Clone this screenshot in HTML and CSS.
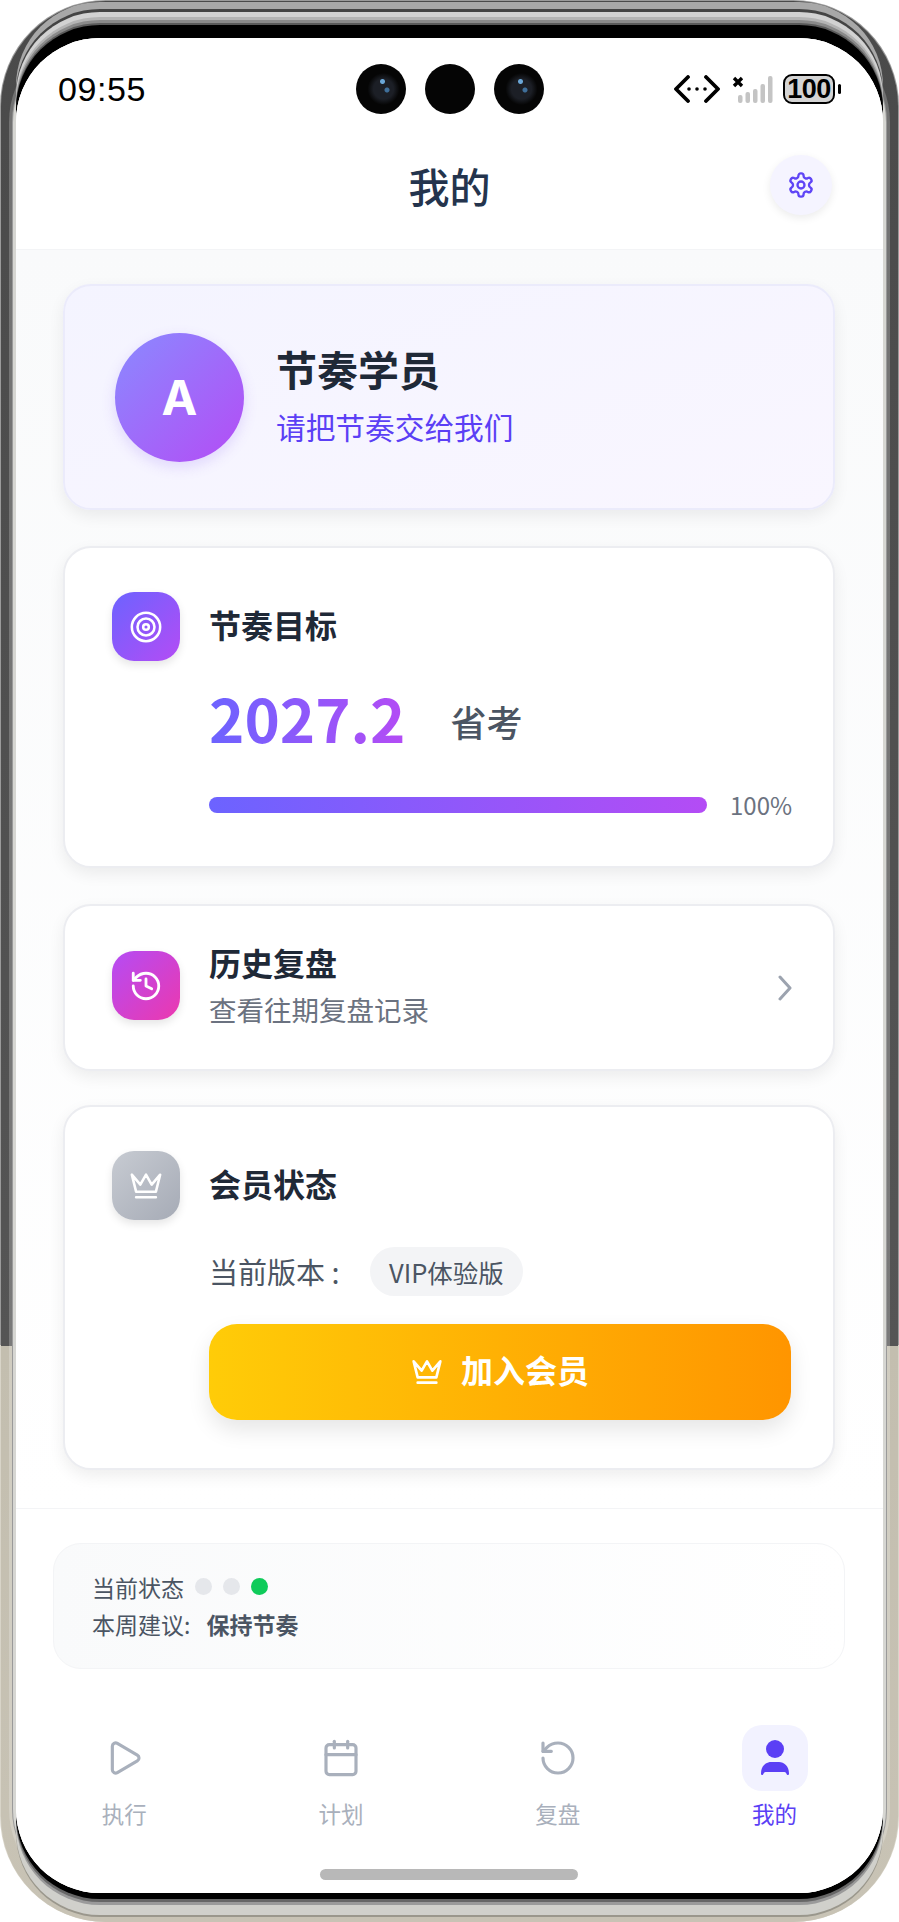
FILE: index.html
```html
<!DOCTYPE html>
<html lang="zh-CN">
<head>
    <meta charset="UTF-8">
    <meta name="viewport" content="width=device-width, initial-scale=1.0">
    <title>我的</title>
    <link rel="stylesheet" href="styles.css">
</head>
<body>
<div class="phone">
  <div class="phone-band">
    <div class="screen">
      <header class="top">
        <div class="statusbar">
          <span class="time">09:55</span>
          <div class="cams">
            <span class="cam"></span>
            <span class="cam cam-plain"></span>
            <span class="cam"></span>
          </div>
          <div class="sys">
            <svg class="sys-link" viewBox="0 0 46 28" fill="none" stroke="#000" stroke-width="3.8" stroke-linecap="round" stroke-linejoin="round">
              <path d="M14 2 2 14l12 12M32 2l12 12-12 12"/>
              <circle cx="15" cy="14" r="1.8" fill="#000" stroke="none"/>
              <circle cx="23" cy="14" r="1.8" fill="#000" stroke="none"/>
              <circle cx="31" cy="14" r="1.8" fill="#000" stroke="none"/>
            </svg>
            <svg class="sys-signal" viewBox="0 0 42 28">
              <path d="M2 3l8 8M10 3l-8 8" stroke="#000" stroke-width="3.4" fill="none"/>
              <g fill="#c4c4c4">
                <rect x="6" y="20" width="4.5" height="8" rx="2"/>
                <rect x="13.5" y="17" width="4.5" height="11" rx="2"/>
                <rect x="21" y="14" width="4.5" height="14" rx="2"/>
                <rect x="28.5" y="9" width="4.5" height="19" rx="2"/>
                <rect x="36" y="1" width="4.5" height="27" rx="2"/>
              </g>
            </svg>
            <div class="battery"><span class="battery-num">100</span></div>
            <span class="battery-nub"></span>
          </div>
        </div>
        <div class="titlebar">
          <span></span>
          <h1 class="page-title">我的</h1>
          <button class="gear">
            <svg width="28" height="28" viewBox="0 0 24 24" fill="none" stroke="#5f45f6" stroke-width="2" stroke-linecap="round" stroke-linejoin="round">
              <path d="M12.22 2h-.44a2 2 0 0 0-2 2v.18a2 2 0 0 1-1 1.73l-.43.25a2 2 0 0 1-2 0l-.15-.08a2 2 0 0 0-2.73.73l-.22.38a2 2 0 0 0 .73 2.73l.15.1a2 2 0 0 1 1 1.72v.51a2 2 0 0 1-1 1.74l-.15.09a2 2 0 0 0-.73 2.73l.22.38a2 2 0 0 0 2.73.73l.15-.08a2 2 0 0 1 2 0l.43.25a2 2 0 0 1 1 1.73V20a2 2 0 0 0 2 2h.44a2 2 0 0 0 2-2v-.18a2 2 0 0 1 1-1.73l.43-.25a2 2 0 0 1 2 0l.15.08a2 2 0 0 0 2.73-.73l.22-.39a2 2 0 0 0-.73-2.73l-.15-.08a2 2 0 0 1-1-1.74v-.5a2 2 0 0 1 1-1.74l.15-.09a2 2 0 0 0 .73-2.73l-.22-.38a2 2 0 0 0-2.73-.73l-.15.08a2 2 0 0 1-2 0l-.43-.25a2 2 0 0 1-1-1.73V4a2 2 0 0 0-2-2z"/>
              <circle cx="12" cy="12" r="3"/>
            </svg>
          </button>
        </div>
      </header>

      <main class="content">
        <section class="card profile">
          <div class="avatar">A</div>
          <div class="profile-text">
            <div class="profile-name">节奏学员</div>
            <div class="profile-motto">请把节奏交给我们</div>
          </div>
        </section>

        <section class="card goal">
          <div class="card-head">
            <div class="tile tile-violet">
              <svg width="34" height="34" viewBox="0 0 24 24" fill="none" stroke="#fff" stroke-width="1.8">
                <circle cx="12" cy="12" r="10"/>
                <circle cx="12" cy="12" r="6"/>
                <circle cx="12" cy="12" r="2"/>
              </svg>
            </div>
            <div class="card-title">节奏目标</div>
          </div>
          <div class="goal-row">
            <span class="goal-year">2027.2</span>
            <span class="goal-name">省考</span>
          </div>
          <div class="progress-row">
            <div class="progress"></div>
            <span class="progress-num">100%</span>
          </div>
        </section>

        <section class="card history">
          <div class="tile tile-pink">
            <svg width="34" height="34" viewBox="0 0 24 24" fill="none" stroke="#fff" stroke-width="2" stroke-linecap="round" stroke-linejoin="round">
              <path d="M3 12a9 9 0 1 0 9-9 9.75 9.75 0 0 0-6.74 2.74L3 8"/>
              <path d="M3 3v5h5"/>
              <path d="M12 7v5l4 2"/>
            </svg>
          </div>
          <div class="history-text">
            <div class="card-title">历史复盘</div>
            <div class="history-sub">查看往期复盘记录</div>
          </div>
          <svg class="chevron" width="16" height="26" viewBox="0 0 16 26" fill="none" stroke="#9ca3af" stroke-width="3" stroke-linecap="round" stroke-linejoin="round">
            <path d="M3 2l10 11L3 24"/>
          </svg>
        </section>

        <section class="card member">
          <div class="card-head">
            <div class="tile tile-grey">
              <svg width="34" height="34" viewBox="0 0 24 24" fill="none" stroke="#fff" stroke-width="1.8" stroke-linecap="round" stroke-linejoin="round">
                <path d="m2 4 3 12h14l3-12-6 7-4-7-4 7-6-7zm3 16h14"/>
              </svg>
            </div>
            <div class="card-title">会员状态</div>
          </div>
          <div class="member-row">
            <span class="member-label">当前版本 :</span>
            <span class="pill">VIP体验版</span>
          </div>
          <button class="join">
            <svg width="32" height="32" viewBox="0 0 24 24" fill="none" stroke="#fff" stroke-width="2" stroke-linecap="round" stroke-linejoin="round">
              <path d="m2 4 3 12h14l3-12-6 7-4-7-4 7-6-7zm3 16h14"/>
            </svg>
            <span class="join-text">加入会员</span>
          </button>
        </section>
      </main>

      <footer class="bottom">
        <div class="panel">
          <div class="panel-line">
            当前状态
            <span class="dot"></span>
            <span class="dot"></span>
            <span class="dot dot-on"></span>
          </div>
          <div class="panel-line">本周建议:<b class="panel-tip">保持节奏</b></div>
        </div>
        <nav class="tabs">
          <div class="tab">
            <div class="tab-icon">
              <svg width="40" height="40" viewBox="0 0 24 24" fill="none" stroke="currentColor" stroke-width="1.9" stroke-linecap="round" stroke-linejoin="round">
                <path d="M5 5a2 2 0 0 1 3.008-1.728l11.997 6.998a2 2 0 0 1 .003 3.458l-12 7A2 2 0 0 1 5 19z"/>
              </svg>
            </div>
            <span>执行</span>
          </div>
          <div class="tab">
            <div class="tab-icon">
              <svg width="40" height="40" viewBox="0 0 24 24" fill="none" stroke="currentColor" stroke-width="1.9" stroke-linecap="round" stroke-linejoin="round">
                <path d="M8 2v4"/>
                <path d="M16 2v4"/>
                <rect x="3" y="4" width="18" height="18" rx="2"/>
                <path d="M3 10h18"/>
              </svg>
            </div>
            <span>计划</span>
          </div>
          <div class="tab">
            <div class="tab-icon">
              <svg width="40" height="40" viewBox="0 0 24 24" fill="none" stroke="currentColor" stroke-width="1.9" stroke-linecap="round" stroke-linejoin="round">
                <path d="M3 12a9 9 0 1 0 9-9 9.75 9.75 0 0 0-6.74 2.74L3 8"/>
                <path d="M3 3v5h5"/>
              </svg>
            </div>
            <span>复盘</span>
          </div>
          <div class="tab tab-active">
            <div class="tab-icon">
              <svg width="40" height="40" viewBox="0 0 40 40" fill="currentColor">
                <circle cx="20" cy="11" r="9"/>
                <path d="M7.5 37C6.5 37 6 36.5 6 35.5 6 28 11 24 16 24h8c5 0 10 4 10 11.5 0 1-.5 1.500-1.500 1.500-1 0-1-3-3-3h-19c-2 0-2 3-3 3z"/>
              </svg>
            </div>
            <span>我的</span>
          </div>
        </nav>
        <div class="home-bar"></div>
      </footer>
    </div>
  </div>
</div>
</body>
</html>
```

FILE: styles.css
```css
* { box-sizing: border-box; }
html, body { margin: 0; background: #fff; }
body { font-family: "Noto Sans CJK SC", "Noto Sans", sans-serif; color: #1f2d3d; }
button { font-family: inherit; border: none; cursor: pointer; }

/* device frame */
.phone {
    width: 899px;
    height: 1922px;
    padding: 1px 1px 0;
    border-radius: 106px;
    background: linear-gradient(180deg, #9a9a9a 0, #9a9a9a 70%, #d8d4c8 70%, #d8d4c8 100%);
}
.phone-band {
    position: relative;
    height: 100%;
    padding: 37px 15px 29px;
    border-radius: 105px;
    background: linear-gradient(180deg, #4a4a4a 0, #555 70%, #c3beaf 70%, #c8c3b5 100%);
}
.phone-band::before {
    content: "";
    position: absolute;
    left: 15px;
    right: 15px;
    top: 37px;
    bottom: 29px;
    border-radius: 84px;
    box-shadow:
        0 -13px 0 #000, 0 -15px 0 #5a5a5a, 0 -18px 0 #8a8a8a, 0 -21px 0 #b4b4b4, 0 -26px 0 #d2d2d2, 0 -29px 0 #444, 0 -36px 0 #a8a8a8,
        0 6px 0 #000, 0 9px 0 #666, 0 12px 0 #9a9a9a, 0 22px 0 #d0d0cb, 0 24px 0 #9a978c,
        0 0 0 3px #d6d6d2, 0 0 0 4px #9a9a9a, 0 0 0 7px rgba(255, 255, 255, .22);
}
.screen {
    position: relative;
    height: 100%;
    display: flex;
    flex-direction: column;
    overflow: hidden;
    border-radius: 84px;
    background: #fff;
}

/* top */
.top { height: 212px; flex: none; background: #fff; border-bottom: 1px solid #f3f4f6; }
.statusbar {
    display: grid;
    grid-template-columns: 1fr auto 1fr;
    align-items: center;
    height: 50px;
    margin-top: 26px;
    padding: 0 42px;
}
.time { font-family: "Liberation Sans", sans-serif; font-size: 34px; letter-spacing: .6px; line-height: 48px; color: #000; }
.cams { display: flex; gap: 19px; }
.cam {
    width: 50px;
    height: 50px;
    border-radius: 50%;
    background:
        radial-gradient(circle at 53% 35%, #6aa6d6 0 2px, transparent 3px),
        radial-gradient(circle at 62% 52%, #3f6f9a 0 2px, transparent 3px),
        radial-gradient(circle at 55% 50%, #1c1f26 0 10px, #050505 16px);
}
.cam-plain { background: #050505; }
.sys { display: flex; align-items: center; justify-content: flex-end; }
.sys-link { width: 46px; height: 28px; margin-right: 12px; }
.sys-signal { width: 42px; height: 28px; margin-right: 9px; }
.battery {
    width: 52px;
    height: 30px;
    display: flex;
    align-items: center;
    justify-content: center;
    border: 2.500px solid #000;
    border-radius: 9px;
    background: #d4d4d4;
}
.battery-num { font-family: "Liberation Sans", sans-serif; font-size: 27px; font-weight: 700; color: #000; letter-spacing: -.5px; }
.battery-nub { width: 3px; height: 10px; margin-left: 3px; border-radius: 2px; background: #000; }
.titlebar {
    display: grid;
    grid-template-columns: 1fr auto 1fr;
    align-items: center;
    margin-top: 41px;
    padding: 0 51px;
}
.page-title { margin: 0; font-size: 41px; line-height: 60px; font-weight: 500; color: #24344d; }
.gear {
    justify-self: end;
    width: 62px;
    height: 60px;
    display: flex;
    align-items: center;
    justify-content: center;
    padding: 0;
    border-radius: 50%;
    background: #f5f4ff;
    box-shadow: 0 3px 8px rgba(0, 0, 0, .08);
}

/* cards */
.content {
    flex: 1;
    display: flex;
    flex-direction: column;
    gap: 36px;
    padding: 34px 48px 0 47px;
    background: linear-gradient(180deg, #f9fafb 0, #fff 100%);
}
.card {
    border: 2px solid #ecedf1;
    border-radius: 28px;
    background: #fff;
    box-shadow: 0 6px 16px rgba(0, 0, 0, .07);
}
.profile {
    height: 226px;
    display: flex;
    align-items: center;
    gap: 32px;
    padding-left: 50px;
    border-color: #ebebfb;
    background: linear-gradient(160deg, #f4f4ff 0, #f9f6ff 100%);
}
.avatar {
    width: 129px;
    height: 129px;
    display: flex;
    align-items: center;
    justify-content: center;
    border-radius: 50%;
    font-family: Inter, sans-serif;
    font-size: 48px;
    font-weight: 700;
    color: #fff;
    background: linear-gradient(135deg, #8a8aff 0, #b44cf5 100%);
    box-shadow: 0 5px 14px rgba(120, 80, 240, .18);
}
.profile-text { padding-bottom: 6px; }
.profile-name { font-size: 41px; line-height: 54px; font-weight: 700; color: #1f2937; }
.profile-motto { margin-top: 12px; font-size: 29.700px; line-height: 40px; color: #5b3ff5; }

.goal { height: 322px; padding: 44px 40px 0 47px; }
.member { height: 365px; margin-top: -2px; padding: 44px 40px 0 47px; }
.card-head { display: flex; align-items: center; gap: 29px; }
.card-title { font-size: 32px; line-height: 44px; font-weight: 700; color: #1f2937; }
.card-head .card-title { padding-bottom: 5px; }
.tile {
    width: 68px;
    height: 69px;
    flex: none;
    display: flex;
    align-items: center;
    justify-content: center;
    border-radius: 22px;
    box-shadow: 0 4px 8px rgba(0, 0, 0, .1);
}
.tile-violet { background: linear-gradient(135deg, #6c63ff 0, #b44cf5 100%); }
.tile-pink { background: linear-gradient(135deg, #b44cf5 0, #ec38ae 100%); }
.tile-grey { background: linear-gradient(135deg, #c7cbd2 0, #a6abb6 100%); }

.goal-row { display: flex; align-items: center; gap: 45px; margin: 18px 0 0 97px; height: 76px; }
.goal-year {
    font-size: 60px;
    line-height: 76px;
    font-weight: 700;
    color: transparent;
    background: linear-gradient(90deg, #6c63ff 0, #b44cf5 100%);
    -webkit-background-clip: text;
    background-clip: text;
}
.goal-name { margin-top: 7px; font-size: 36px; font-weight: 500; color: #4b5563; }
.progress-row { display: flex; align-items: center; gap: 23px; margin: 36px 0 0 97px; }
.progress {
    width: 498px;
    height: 16px;
    border-radius: 8px;
    background: linear-gradient(90deg, #6c63ff 0, #b44cf5 100%);
}
.progress-num { font-size: 24px; line-height: 28px; color: #6b7280; }

.history {
    height: 167px;
    display: flex;
    align-items: center;
    gap: 29px;
    padding: 0 40px 4px 47px;
}
.history-text { flex: 1; }
.history .card-title { line-height: 46px; }
.history-sub { margin-top: 1px; font-size: 27.500px; line-height: 46px; color: #6b7280; }
.chevron { flex: none; margin-top: 4px; }

.member-row { display: flex; align-items: center; margin: 26px 0 0 97px; }
.member-label { width: 161px; font-size: 29px; line-height: 50px; color: #4b5563; }
.pill {
    height: 49px;
    padding: 0 19px;
    border-radius: 25px;
    font-size: 25.500px;
    line-height: 49px;
    color: #4b5563;
    background: #f3f4f6;
}
.join {
    width: 582px;
    height: 96px;
    display: flex;
    align-items: center;
    justify-content: center;
    gap: 18px;
    margin: 28px 0 0 97px;
    padding: 0;
    border-radius: 28px;
    font-size: 32px;
    font-weight: 700;
    color: #fff;
    background: linear-gradient(90deg, #ffcc08 0, #ff9500 100%);
    box-shadow: 0 10px 22px rgba(0, 0, 0, .1);
}
.join-text { padding-bottom: 6px; }

/* bottom */
.bottom { flex: none; height: 385px; border-top: 1px solid #f3f4f6; background: #fff; }
.panel {
    height: 126px;
    margin: 34px 38px 0 37px;
    padding: 24px 0 0 38px;
    border: 1px solid #f3f4f6;
    border-radius: 28px;
    background: linear-gradient(90deg, #f9fafb 0, #fff 100%);
}
.panel-line {
    display: flex;
    align-items: center;
    height: 37px;
    font-size: 23px;
    color: #4b5563;
}
.dot { width: 17px; height: 17px; margin-left: 11px; border-radius: 50%; background: #e5e7eb; }
.dot:first-of-type { margin-left: 11px; }
.dot-on { background: #0fcb5a; }
.panel-tip { margin-left: 16px; font-weight: 700; }
.tabs { display: grid; grid-template-columns: repeat(4, 1fr); margin-top: 56px; }
.tab {
    display: flex;
    flex-direction: column;
    align-items: center;
    gap: 7px;
    font-size: 22.500px;
    line-height: 30px;
    color: #a9b0bc;
}
.tab-icon {
    width: 66px;
    height: 66px;
    display: flex;
    align-items: center;
    justify-content: center;
    border-radius: 20px;
}
.tab-active { color: #5b3ff5; }
.tab-active .tab-icon { background: #f2f2ff; }
.home-bar {
    width: 258px;
    height: 11px;
    margin: 41px 0 0 304px;
    border-radius: 6px;
    background: #b8b8b8;
}
```
